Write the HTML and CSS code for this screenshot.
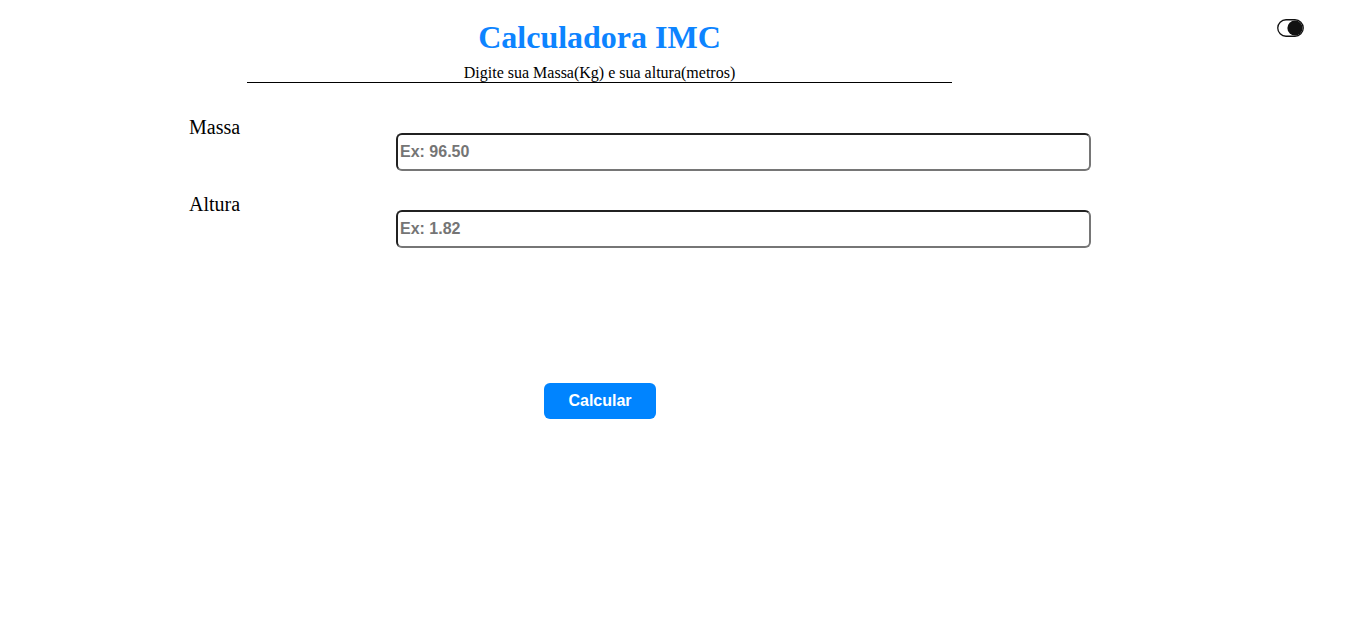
FILE: index.html
```html
<!DOCTYPE html>
<html lang="pt-BR">
<head>
<meta charset="utf-8">
<title>Calculadora IMC</title>
<link rel="stylesheet" href="styles.css">
</head>
<body>
<div class="page">
  <main class="main">
    <header class="header">
      <h1 class="title">Calculadora IMC</h1>
      <p class="subtitle">Digite sua Massa(Kg) e sua altura(metros)</p>
    </header>
    <form class="form">
      <div class="field">
        <label class="label" for="massa">Massa</label>
        <input class="input" id="massa" type="text" placeholder="Ex: 96.50">
      </div>
      <div class="field">
        <label class="label" for="altura">Altura</label>
        <input class="input" id="altura" type="text" placeholder="Ex: 1.82">
      </div>
    </form>
    <div class="actions">
      <button class="btn" type="button">Calcular</button>
    </div>
  </main>
  <button class="theme-toggle" type="button" aria-label="Alternar tema">
    <svg width="27" height="18" viewBox="0 0 27 18">
      <rect x="0.75" y="0.75" width="25.5" height="16.5" rx="8.25" fill="#fff" stroke="#111" stroke-width="1.3"/>
      <circle cx="18" cy="9" r="7.6" fill="#111"/>
    </svg>
  </button>
</div>
</body>
</html>
```

FILE: styles.css
```css
html, body {
  margin: 0;
  padding: 0;
  background: #ffffff;
}

body {
  font-family: "Liberation Serif", "Times New Roman", serif;
  color: #000;
}

.page {
  position: relative;
  display: flex;
  min-height: 637px;
}

.main {
  width: 1200px;
  display: flex;
  flex-direction: column;
}

.header {
  width: 705px;
  margin-left: 247px;
  padding-top: 19px;
  text-align: center;
  border-bottom: 1px solid #000;
}

.title {
  margin: 0 0 8px;
  font-size: 32px;
  font-weight: bold;
  color: #0d84ff;
}

.subtitle {
  margin: 0;
  font-size: 16px;
  line-height: 18px;
}

.form {
  display: flex;
  flex-direction: column;
  gap: 22px;
  padding-left: 189px;
  margin-top: 33px;
}

.field {
  display: grid;
  grid-template-columns: 207px 695px;
  align-items: start;
}

.label {
  font-size: 20px;
  line-height: 23px;
}

.input {
  margin-top: 17px;
  box-sizing: border-box;
  width: 695px;
  height: 38px;
  padding: 1px 2px;
  border: 2px inset rgb(118, 118, 118);
  border-radius: 6px;
  font-family: "Liberation Sans", Arial, sans-serif;
  font-size: 16px;
  font-weight: bold;
  color: #000;
  background: #fff;
  outline: none;
}

.input::placeholder {
  color: #757575;
  opacity: 1;
}

.actions {
  display: flex;
  justify-content: center;
  margin-top: 135px;
}

.btn {
  width: 112px;
  height: 36px;
  border: none;
  border-radius: 6px;
  background: #0084ff;
  color: #fff;
  font-family: "Liberation Sans", Arial, sans-serif;
  font-size: 16px;
  font-weight: bold;
  cursor: pointer;
}

.theme-toggle {
  position: absolute;
  top: 19px;
  right: 42px;
  padding: 0;
  margin: 0;
  border: none;
  background: none;
  line-height: 0;
  cursor: pointer;
}
```
